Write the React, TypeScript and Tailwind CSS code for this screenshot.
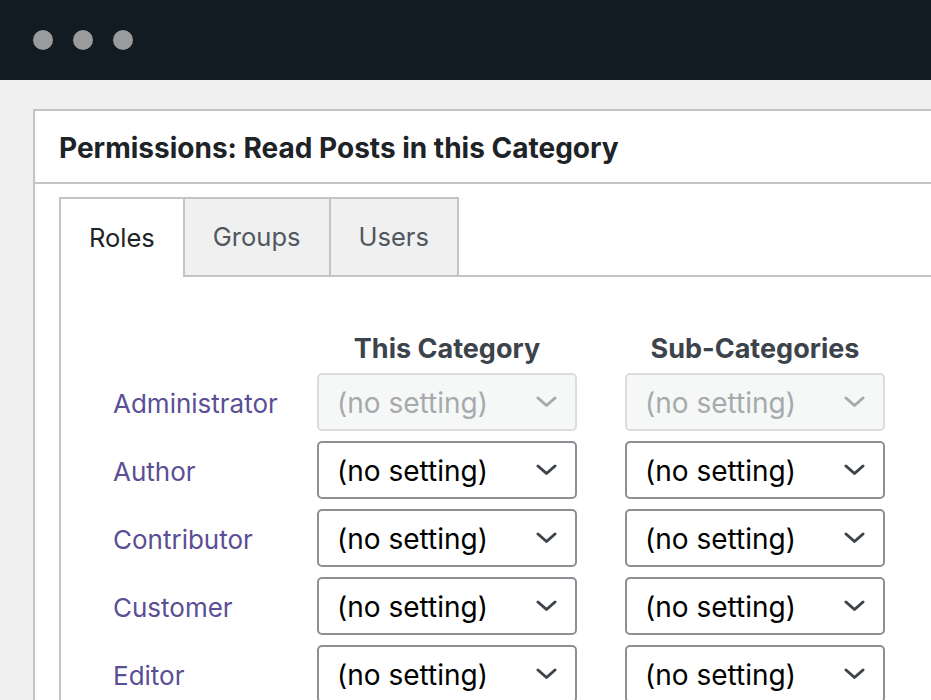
const roles = ["Administrator", "Author", "Contributor", "Customer", "Editor"];

function Chevron({ disabled }: { disabled?: boolean }) {
  return (
    <svg
      className="w-[21px] h-[12px] shrink-0"
      viewBox="0 0 21 12"
      fill="none"
      stroke={disabled ? "#a7aaad" : "#3c434a"}
      strokeWidth={3}
      strokeLinecap="round"
      strokeLinejoin="round"
    >
      <path d="M2 2l8.5 7.5L19 2" />
    </svg>
  );
}

function FakeSelect({ disabled }: { disabled?: boolean }) {
  return (
    <div
      className={
        disabled
          ? "h-[58px] w-[260px] shrink-0 rounded-[5px] border-2 border-[#dcdcde] bg-[#f6f7f7] text-[#a7aaad] flex items-center justify-between pl-[18px] pr-[18px]"
          : "h-[58px] w-[260px] shrink-0 rounded-[5px] border-2 border-[#8c8f94] bg-white text-black flex items-center justify-between pl-[18px] pr-[18px]"
      }
    >
      <span className="text-[28px] leading-none pt-[2px]">(no setting)</span>
      <Chevron disabled={disabled} />
    </div>
  );
}

export default function App() {
  return (
    <div
      className="w-[931px] h-[700px] overflow-hidden bg-[#f0f0f1]"
      style={{ fontFamily: "Inter, 'Noto Sans', sans-serif" }}
    >
      {/* Window chrome */}
      <div className="h-[80px] bg-[#121b21] flex items-center pl-[33px] gap-[20px]">
        <span className="w-5 h-5 rounded-full bg-[#9a9b9c]" />
        <span className="w-5 h-5 rounded-full bg-[#9a9b9c]" />
        <span className="w-5 h-5 rounded-full bg-[#9a9b9c]" />
      </div>

      <div className="pt-[29px] pl-[33px]">
        <div className="w-[940px] bg-white border-2 border-r-0 border-b-0 border-[#c3c4c7]">
          {/* Header */}
          <div className="h-[73px] border-b-2 border-[#c3c4c7] flex items-center pl-[24px] pt-[2px]">
            <h2 className="text-[28px] font-bold text-[#1d2327]">
              Permissions: Read Posts in this Category
            </h2>
          </div>

          <div className="pl-[24px] pt-[13px]">
            {/* Tabs */}
            <div className="flex border-b-2 border-[#c3c4c7] h-[80px]">
              <div className="-mb-[2px] h-[80px] bg-white border-2 border-b-0 border-r-0 border-[#c3c4c7] px-[28px] flex items-center text-[25.5px] text-[#1d2327]">
                Roles
              </div>
              <div className="h-[78px] bg-[#f0f0f1] border-2 border-b-0 border-r-0 border-[#c3c4c7] px-[28px] flex items-center text-[25.5px] text-[#50575e]">
                Groups
              </div>
              <div className="h-[78px] bg-[#f0f0f1] border-2 border-b-0 border-[#c3c4c7] px-[28px] flex items-center text-[25.5px] text-[#50575e]">
                Users
              </div>
            </div>

            {/* Tab content */}
            <div className="border-l-2 border-[#c3c4c7] pl-[52px] pt-[52px] pb-10">
              <div className="flex h-[40px] items-center mb-[4px]">
                <div className="w-[204px] shrink-0" />
                <div className="w-[260px] shrink-0 text-center text-[27px] font-bold text-[#3c434a]">This Category</div>
                <div className="w-[260px] shrink-0 ml-[48px] text-center text-[27px] font-bold text-[#3c434a]">Sub-Categories</div>
              </div>
              <div className="flex flex-col gap-[10px]">
                {roles.map((role, i) => (
                  <div key={role} className="flex items-center">
                    <div className="w-[204px] shrink-0 text-[26px] text-[#5a4f95] pt-[3px]">{role}</div>
                    <FakeSelect disabled={i === 0} />
                    <div className="ml-[48px]">
                      <FakeSelect disabled={i === 0} />
                    </div>
                  </div>
                ))}
              </div>
            </div>
          </div>
        </div>
      </div>
    </div>
  );
}
